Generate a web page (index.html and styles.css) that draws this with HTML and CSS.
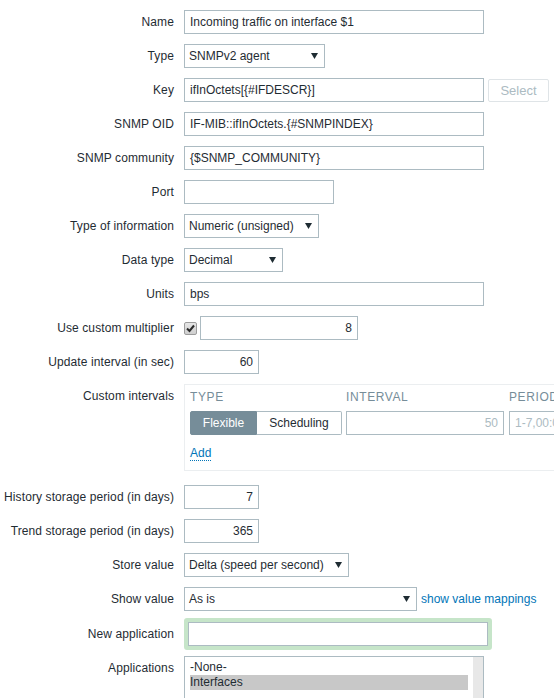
FILE: index.html
```html
<!DOCTYPE html>
<html>
<head>
<meta charset="utf-8">
<link rel="stylesheet" href="styles.css">
</head>
<body>
<div class="form">
  <div class="row">
    <div class="label">Name</div>
    <div class="field"><div class="input w300">Incoming traffic on interface $1</div></div>
  </div>
  <div class="row">
    <div class="label">Type</div>
    <div class="field"><div class="select w141"><span>SNMPv2 agent</span><svg class="arrow" width="7" height="6" viewBox="0 0 7 6"><polygon points="0,0 7,0 3.5,6"/></svg></div></div>
  </div>
  <div class="row">
    <div class="label">Key</div>
    <div class="field"><div class="input w300">ifInOctets[{#IFDESCR}]</div><div class="btn-disabled">Select</div></div>
  </div>
  <div class="row">
    <div class="label">SNMP OID</div>
    <div class="field"><div class="input w300">IF-MIB::ifInOctets.{#SNMPINDEX}</div></div>
  </div>
  <div class="row">
    <div class="label">SNMP community</div>
    <div class="field"><div class="input w300">{$SNMP_COMMUNITY}</div></div>
  </div>
  <div class="row">
    <div class="label">Port</div>
    <div class="field"><div class="input w150"></div></div>
  </div>
  <div class="row">
    <div class="label">Type of information</div>
    <div class="field"><div class="select w135"><span>Numeric (unsigned)</span><svg class="arrow" width="7" height="6" viewBox="0 0 7 6"><polygon points="0,0 7,0 3.5,6"/></svg></div></div>
  </div>
  <div class="row">
    <div class="label">Data type</div>
    <div class="field"><div class="select w99"><span>Decimal</span><svg class="arrow" width="7" height="6" viewBox="0 0 7 6"><polygon points="0,0 7,0 3.5,6"/></svg></div></div>
  </div>
  <div class="row">
    <div class="label">Units</div>
    <div class="field"><div class="input w300">bps</div></div>
  </div>
  <div class="row">
    <div class="label">Use custom multiplier</div>
    <div class="field">
      <span class="checkbox"><svg width="11" height="11" viewBox="0 0 11 11"><path d="M2 5.5 L4.5 8 L9 2.5" fill="none" stroke="#2b2b2b" stroke-width="2"/></svg></span>
      <div class="input w158 right">8</div>
    </div>
  </div>
  <div class="row">
    <div class="label">Update interval (in sec)</div>
    <div class="field"><div class="input w75 right">60</div></div>
  </div>
  <div class="row row-ci">
    <div class="label">Custom intervals</div>
    <div class="field">
      <div class="ci-box">
        <div class="ci-grid">
          <div class="ci-head">TYPE</div>
          <div class="ci-head">INTERVAL</div>
          <div class="ci-head">PERIOD</div>
          <div class="seg">
            <span class="seg-on">Flexible</span><span class="seg-off">Scheduling</span>
          </div>
          <div class="input w158 right muted">50</div>
          <div class="input period muted">1-7,00:00-24:00</div>
        </div>
        <div class="ci-add"><span class="link-dotted">Add</span></div>
      </div>
    </div>
  </div>
  <div class="row">
    <div class="label">History storage period (in days)</div>
    <div class="field"><div class="input w75 right">7</div></div>
  </div>
  <div class="row">
    <div class="label">Trend storage period (in days)</div>
    <div class="field"><div class="input w75 right">365</div></div>
  </div>
  <div class="row">
    <div class="label">Store value</div>
    <div class="field"><div class="select w165"><span>Delta (speed per second)</span><svg class="arrow" width="7" height="6" viewBox="0 0 7 6"><polygon points="0,0 7,0 3.5,6"/></svg></div></div>
  </div>
  <div class="row">
    <div class="label">Show value</div>
    <div class="field"><div class="select w233"><span>As is</span><svg class="arrow" width="7" height="6" viewBox="0 0 7 6"><polygon points="0,0 7,0 3.5,6"/></svg></div><span class="link">show value mappings</span></div>
  </div>
  <div class="row row-newapp">
    <div class="label">New application</div>
    <div class="field"><div class="green"><div class="input w300"></div></div></div>
  </div>
  <div class="row">
    <div class="label">Applications</div>
    <div class="field">
      <div class="listbox">
        <div class="options">
          <div class="opt">-None-</div>
          <div class="opt sel">Interfaces</div>
        </div>
        <div class="scrollbar"></div>
      </div>
    </div>
  </div>
</div>
</body>
</html>
```

FILE: styles.css
```css
html, body {
  margin: 0;
  padding: 0;
  overflow: hidden;
  background: #ffffff;
}
body {
  font-family: "Liberation Sans", Arial, sans-serif;
  font-size: 12px;
  color: #1f2c33;
  width: 554px;
  height: 698px;
}
.form {
  padding-top: 10px;
}
.row {
  display: flex;
  column-gap: 10px;
  margin-bottom: 10px;
}
.label {
  width: 174px;
  flex: none;
  text-align: right;
  padding-top: 5px;
  line-height: 14px;
  white-space: nowrap;
  letter-spacing: 0.1px;
}
.field {
  display: flex;
  align-items: center;
  column-gap: 4px;
  min-width: 0;
}
.input {
  box-sizing: border-box;
  height: 24px;
  border: 1px solid #acbbc2;
  background: #fff;
  padding: 0 5px;
  line-height: 22px;
  white-space: nowrap;
  overflow: hidden;
  flex: none;
}
.right { text-align: right; }
.muted { color: #acbbc2; }
.w300 { width: 300px; }
.w150 { width: 150px; }
.w158 { width: 158px; }
.w75 { width: 75px; }
.w141 { width: 141px; }
.w135 { width: 135px; }
.w99 { width: 99px; }
.w165 { width: 165px; }
.w233 { width: 233px; }
.select {
  box-sizing: border-box;
  height: 24px;
  border: 1px solid #acbbc2;
  background: #fff;
  padding: 0 6px 0 4px;
  display: flex;
  align-items: center;
  justify-content: space-between;
  white-space: nowrap;
  flex: none;
}
.arrow polygon { fill: #1f2c33; }
.btn-disabled {
  box-sizing: border-box;
  width: 61px;
  height: 23px;
  border: 1px solid #dfe4e7;
  border-radius: 2px;
  color: #acbbc2;
  text-align: center;
  line-height: 21px;
  font-size: 13px;
  flex: none;
}
.checkbox {
  box-sizing: border-box;
  width: 13px;
  height: 13px;
  border: 1px solid #9c9c9c;
  border-radius: 2px;
  background: linear-gradient(#e6e6e6, #cfcfcf);
  display: flex;
  align-items: center;
  justify-content: center;
  flex: none;
  margin-right: -1px;
}
.row-ci { margin-bottom: 14px; }
.ci-box {
  box-sizing: border-box;
  width: 420px;
  height: 87px;
  border: 1px solid #ebeef0;
  padding: 5px 5px 0 5px;
  flex: none;
}
.ci-grid {
  display: grid;
  grid-template-columns: 152px 158px 200px;
  column-gap: 4px;
}
.ci-grid > :nth-child(3n) { margin-left: 1px; }
.ci-head {
  color: #768d99;
  line-height: 14px;
  height: 21px;
  letter-spacing: 0.6px;
}
.seg {
  display: flex;
  height: 24px;
}
.seg-on {
  box-sizing: border-box;
  width: 67px;
  background: #768d99;
  border: 1px solid #768d99;
  color: #fff;
  text-align: center;
  line-height: 22px;
  border-radius: 2px 0 0 2px;
}
.seg-off {
  box-sizing: border-box;
  width: 85px;
  border: 1px solid #acbbc2;
  border-left: none;
  text-align: center;
  line-height: 22px;
  border-radius: 0 2px 2px 0;
}
.period { width: 200px; }
.ci-add {
  margin-top: 11px;
  line-height: 14px;
}
.link-dotted {
  color: #0275b8;
  border-bottom: 1px dotted #0275b8;
}
.link {
  color: #0275b8;
  white-space: nowrap;
}
.row-newapp { margin-top: -3px; margin-bottom: 6px; }
.row-newapp .label { padding-top: 9px; }
.green {
  border: 4px solid #c6e5c9;
  border-radius: 3px;
}
.listbox {
  box-sizing: border-box;
  width: 300px;
  height: 70px;
  border: 1px solid #acbbc2;
  display: flex;
}
.options {
  flex: 1;
  padding: 3px 5px 0 5px;
}
.opt {
  line-height: 15px;
  height: 15px;
}
.sel { background: #c8c8c8; }
.scrollbar {
  width: 10px;
  background: #e8e8e8;
}
```
